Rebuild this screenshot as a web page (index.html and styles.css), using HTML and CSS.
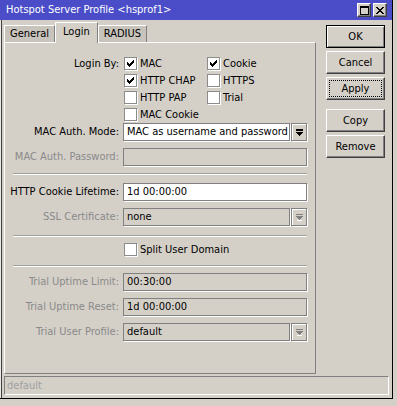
FILE: index.html
```html
<!DOCTYPE html>
<html>
<head>
<meta charset="utf-8">
<link rel="stylesheet" href="styles.css">
</head>
<body>
<div class="window">
  <div class="titlebar">
    <span class="title">Hotspot Server Profile &lt;hsprof1&gt;</span>
    <div class="tb-btns">
      <span class="tb-btn"><svg width="9" height="9" viewBox="0 0 9 9" shape-rendering="crispEdges"><path d="M0 0h9v2H0z M0 2h1v7H0z M8 2h1v7H8z M0 8h9v1H0z" fill="#000"/></svg></span>
      <span class="tb-btn"><svg width="8" height="7" viewBox="0 0 8 7" shape-rendering="crispEdges"><path d="M0 0h2v1H0z M6 0h2v1H6z M1 1h2v1H1z M5 1h2v1H5z M2 2h4v1H2z M3 3h2v1H3z M2 4h4v1H2z M1 5h2v1H1z M5 5h2v1H5z M0 6h2v1H0z M6 6h2v1H6z" fill="#000"/></svg></span>
    </div>
  </div>
  <div class="body">
    <div class="main">
      <div class="left">
        <div class="tabs">
          <div class="tab">General</div>
          <div class="tab active">Login</div>
          <div class="tab">RADIUS</div>
        </div>
        <div class="panel">
          <div class="cbgrid">
            <div class="lbl">Login By:</div>
            <div class="cb"><span class="box"><svg class="chk" width="7" height="7" viewBox="0 0 7 7" shape-rendering="crispEdges"><path d="M6 0h1v1H6z M5 1h2v1H5z M0 2h1v1H0z M4 2h3v1H4z M0 3h2v1H0z M3 3h3v1H3z M0 4h5v1H0z M1 5h3v1H1z M2 6h1v1H2z" fill="#000"/></svg></span><span>MAC</span></div>
            <div class="cb"><span class="box"><svg class="chk" width="7" height="7" viewBox="0 0 7 7" shape-rendering="crispEdges"><path d="M6 0h1v1H6z M5 1h2v1H5z M0 2h1v1H0z M4 2h3v1H4z M0 3h2v1H0z M3 3h3v1H3z M0 4h5v1H0z M1 5h3v1H1z M2 6h1v1H2z" fill="#000"/></svg></span><span>Cookie</span></div>
            <div></div>
            <div class="cb"><span class="box"><svg class="chk" width="7" height="7" viewBox="0 0 7 7" shape-rendering="crispEdges"><path d="M6 0h1v1H6z M5 1h2v1H5z M0 2h1v1H0z M4 2h3v1H4z M0 3h2v1H0z M3 3h3v1H3z M0 4h5v1H0z M1 5h3v1H1z M2 6h1v1H2z" fill="#000"/></svg></span><span>HTTP CHAP</span></div>
            <div class="cb"><span class="box"></span><span>HTTPS</span></div>
            <div></div>
            <div class="cb"><span class="box"></span><span>HTTP PAP</span></div>
            <div class="cb"><span class="box"></span><span>Trial</span></div>
            <div></div>
            <div class="cb"><span class="box"></span><span>MAC Cookie</span></div>
            <div></div>
          </div>

          <div class="row">
            <div class="lbl">MAC Auth. Mode:</div>
            <div class="select">
              <div class="field sel">MAC as username and password</div>
              <div class="drop"><svg width="7" height="7" viewBox="0 0 7 7" shape-rendering="crispEdges"><path d="M0 0h7v2H0z M0 3h7v1H0z M1 4h5v1H1z M2 5h3v1H2z M3 6h1v1H3z" fill="#000"/></svg></div>
            </div>
          </div>
          <div class="row">
            <div class="lbl dis">MAC Auth. Password:</div>
            <div class="field dis"></div>
          </div>
          <div class="sep s1"></div>
          <div class="row">
            <div class="lbl">HTTP Cookie Lifetime:</div>
            <div class="field">1d 00:00:00</div>
          </div>
          <div class="row">
            <div class="lbl dis">SSL Certificate:</div>
            <div class="select">
              <div class="field sel dis">none</div>
              <div class="drop"><svg width="7" height="7" viewBox="0 0 7 7" shape-rendering="crispEdges"><path d="M0 0h7v1H0z M0 2h7v1H0z M1 3h5v1H1z M2 4h3v1H2z M3 5h1v1H3z" fill="#808080"/><path d="M1 6h5v1H1z" fill="#fff"/></svg></div>
            </div>
          </div>
          <div class="sep s2"></div>
          <div class="cbrow">
            <div></div>
            <div class="cb"><span class="box"></span><span>Split User Domain</span></div>
          </div>
          <div class="sep s3"></div>
          <div class="row">
            <div class="lbl dis">Trial Uptime Limit:</div>
            <div class="field dis">00:30:00</div>
          </div>
          <div class="row">
            <div class="lbl dis">Trial Uptime Reset:</div>
            <div class="field dis">1d 00:00:00</div>
          </div>
          <div class="row">
            <div class="lbl dis">Trial User Profile:</div>
            <div class="select">
              <div class="field sel dis">default</div>
              <div class="drop"><svg width="7" height="7" viewBox="0 0 7 7" shape-rendering="crispEdges"><path d="M0 0h7v1H0z M0 2h7v1H0z M1 3h5v1H1z M2 4h3v1H2z M3 5h1v1H3z" fill="#808080"/><path d="M1 6h5v1H1z" fill="#fff"/></svg></div>
            </div>
          </div>
        </div>
      </div>
      <div class="buttons">
        <div class="btn default">OK</div>
        <div class="btn">Cancel</div>
        <div class="btn focus">Apply</div>
        <div class="btn gap">Copy</div>
        <div class="btn">Remove</div>
      </div>
    </div>
    <div class="status">default</div>
  </div>
</div>
</body>
</html>
```
FILE: styles.css
```css
html, body {
  margin: 0;
  padding: 0;
}
body {
  width: 397px;
  height: 406px;
  overflow: hidden;
  background: #d4d0c8;
  font-family: "DejaVu Sans Condensed", "DejaVu Sans", "Liberation Sans", sans-serif;
  font-stretch: condensed;
  font-size: 11px;
  color: #000;
}
.window {
  width: 392px;
  height: 398px;
  border-right: 1px solid #000;
  border-bottom: 1px solid #000;
  background: #d4d0c8;
  display: flex;
  flex-direction: column;
}
.titlebar {
  height: 20px;
  flex: none;
  background: #4a4dc7;
  color: #fff;
  display: flex;
  align-items: center;
  padding-left: 6px;
}
.title {
  white-space: nowrap;
  line-height: 20px;
}
.tb-btns {
  margin-left: auto;
  margin-right: 5px;
  display: flex;
  gap: 2px;
}
.tb-btn {
  width: 14px;
  height: 14px;
  box-sizing: border-box;
  background: #d4d0c8;
  border-top: 1px solid #fff;
  border-left: 1px solid #fff;
  border-right: 1px solid #404040;
  border-bottom: 1px solid #404040;
  box-shadow: inset -1px -1px 0 #808080;
  display: flex;
  align-items: center;
  justify-content: center;
}
.tb-btn svg { display: block; }
.body {
  flex: 1;
  border-left: 1px solid #ebe9e4;
  box-shadow: inset 1px 0 0 #404040;
  padding: 2px 3px 3px 3px;
  display: flex;
  flex-direction: column;
}
.main {
  height: 352px;
  display: flex;
  gap: 10px;
}
.left {
  width: 312px;
  display: flex;
  flex-direction: column;
}
.tabs {
  height: 20px;
  display: flex;
  align-items: flex-end;
  flex: none;
}
.tab {
  height: 17px;
  box-sizing: border-box;
  padding: 0 5px;
  border-top: 1px solid #fff;
  border-left: 1px solid #fff;
  border-right: 1px solid #808080;
  background: #c8c4bc;
  line-height: 15px;
  white-space: nowrap;
}
.tab.active {
  height: 21px;
  margin-bottom: -1px;
  background: #d4d0c8;
  position: relative;
  z-index: 1;
  padding: 0 7px;
  line-height: 17px;
}
.panel {
  flex: 1;
  border: 1px solid;
  border-color: #fff #808080 #808080 #fff;
  padding-top: 12px;
  display: flex;
  flex-direction: column;
}
.cbgrid {
  display: grid;
  grid-template-columns: 114px 79px auto;
  grid-auto-rows: 17px;
  column-gap: 4px;
  align-items: center;
}
.cbrow {
  display: grid;
  grid-template-columns: 114px auto;
  column-gap: 4px;
  height: 17px;
  align-items: center;
}
.lbl {
  text-align: right;
  white-space: nowrap;
}
.lbl.dis {
  color: #8a8a8a;
}
.cb {
  display: flex;
  align-items: center;
  gap: 2px;
  margin-left: 1px;
  white-space: nowrap;
}
.box {
  width: 13px;
  height: 13px;
  box-sizing: border-box;
  border: 1px solid #8c8c8c;
  background: #fff;
  box-shadow: 1px 1px 0 #fff;
  display: flex;
  align-items: center;
  justify-content: center;
  flex: none;
  margin-right: 1px;
}
.chk { display: block; }
.row {
  display: grid;
  grid-template-columns: 114px 184px;
  column-gap: 4px;
  height: 25px;
  align-items: start;
}
.row .lbl {
  line-height: 18px;
}
.field {
  height: 18px;
  box-sizing: border-box;
  border: 1px solid #808080;
  box-shadow: 1px 1px 0 #fff;
  background: #fff;
  padding-left: 3px;
  line-height: 16px;
  white-space: nowrap;
  overflow: hidden;
}
.field.dis {
  background: #d4d0c8;
}
.select {
  display: flex;
}
.field.sel {
  width: 167px;
  margin-right: 1px;
}
.drop {
  width: 16px;
  height: 18px;
  box-sizing: border-box;
  border: 1px solid #808080;
  box-shadow: 1px 1px 0 #fff, inset 1px 1px 0 #fff;
  background: #d4d0c8;
  display: flex;
  align-items: center;
  justify-content: center;
}
.drop svg { display: block; }
.sep {
  margin-left: 8px;
  width: 294px;
  height: 0;
  border-top: 1px solid #a0a0a0;
  border-bottom: 1px solid #fff;
}
.sep.s1 { margin-bottom: 8px; }
.sep.s2 { margin-top: 2px; margin-bottom: 4px; }
.sep.s3 { margin-top: 7px; margin-bottom: 6px; }
.buttons {
  width: 59px;
  padding-top: 3px;
  display: flex;
  flex-direction: column;
  gap: 3px;
}
.btn {
  height: 23px;
  box-sizing: border-box;
  border-top: 1px solid #fff;
  border-left: 1px solid #fff;
  border-right: 1px solid #404040;
  border-bottom: 1px solid #404040;
  box-shadow: inset -1px -1px 0 #808080;
  text-align: center;
  line-height: 21px;
}
.btn.default {
  border: 1px solid #000;
  box-shadow: inset 1px 1px 0 #fff, inset -1px -1px 0 #808080;
}
.btn.focus {
  outline: 1px dotted #000;
  outline-offset: -4px;
}
.btn.gap {
  margin-top: 6px;
}
.status {
  margin-top: 2px;
  height: 19px;
  box-sizing: border-box;
  border: 1px solid;
  border-color: #808080 #fff #fff #808080;
  color: #a0a0a0;
  padding-left: 2px;
  line-height: 17px;
}
```
